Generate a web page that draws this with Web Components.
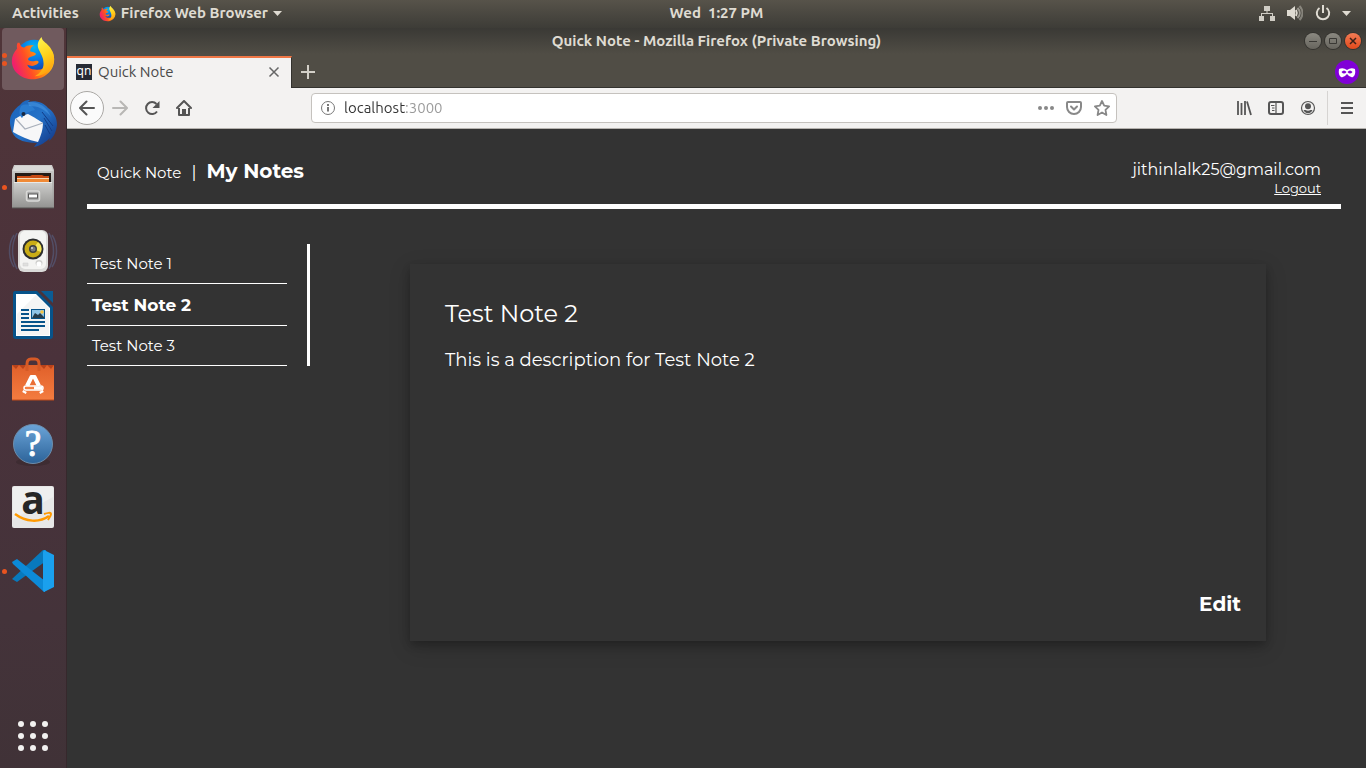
<!DOCTYPE html>
<html lang="en">
<head>
<meta charset="utf-8">
<meta name="viewport" content="width=device-width, initial-scale=1">
<title>Quick Note</title>
<style>
  html, body { margin: 0; height: 100%; }
  body { background: #333; font-family: Ubuntu, "Noto Sans", sans-serif; }
</style>
</head>
<body>
<desk-top>
  <system-bar slot="bar"></system-bar>
  <app-dock slot="dock"></app-dock>
  <browser-window heading="Quick Note - Mozilla Firefox (Private Browsing)" tab="Quick Note" address="localhost:3000">
    <quick-notes>
      <user-badge slot="user" email="jithinlalk25@gmail.com"></user-badge>
      <note-item slot="list">Test Note 1</note-item>
      <note-item slot="list" selected>Test Note 2</note-item>
      <note-item slot="list">Test Note 3</note-item>
      <note-card heading="Test Note 2">This is a description for Test Note 2</note-card>
    </quick-notes>
  </browser-window>
</desk-top>

<script>
const FIREFOX = `<svg viewBox="0 0 48 48" aria-hidden="true">
  <defs>
    <radialGradient id="globe" cx=".5" cy=".2" r=".8"><stop offset="0" stop-color="#00b7f5"/><stop offset=".5" stop-color="#0a6fe0"/><stop offset="1" stop-color="#1d2b8f"/></radialGradient>
    <linearGradient id="fox" x1=".9" y1=".3" x2=".05" y2=".6"><stop offset="0" stop-color="#ffc21c"/><stop offset=".3" stop-color="#ff960e"/><stop offset=".65" stop-color="#ff4f24"/><stop offset="1" stop-color="#f0206c"/></linearGradient>
    <linearGradient id="tail" x1=".3" y1="0" x2=".6" y2="1"><stop offset="0" stop-color="#fff44f"/><stop offset=".5" stop-color="#ffd21c"/><stop offset="1" stop-color="#ff9a0d"/></linearGradient>
  </defs>
  <circle cx="25" cy="24" r="19" fill="url(#globe)"/>
  <path fill="url(#fox)" d="M8 8c-1 2-1 4-.5 6C4 18 2 22 2 27c0 11 10 19 22 19s22-9 22-20c0-3-1-7-2-9-1 9-2 12-6 14-2 4-6 6-12 5-4 0-7-2-8-5 3 1 6 2 9 0 2-1 4-3 2-4-3-1-4 2-10-1-1-4 6-3 8-6 0-2-4-2-6-3 0-2 1-5 4-6-4-1-8 0-10 2-2 0-4-1-5-5Z"/>
  <path fill="url(#tail)" d="M33 2c-4 4-5 8-3 13 3 6 5 9 5 15 0 6-4 10-9 13 12-1 20-9 20-18 0-8-5-13-8-16-2-2-5-4-5-7Z"/>
</svg>`;

function define(name, markup, setup) {
  const template = document.createElement('template');
  template.innerHTML = markup;
  customElements.define(name, class extends HTMLElement {
    constructor() {
      super();
      this.attachShadow({ mode: 'open' }).append(template.content.cloneNode(true));
    }
    connectedCallback() {
      if (setup) setup(this, selector => this.shadowRoot.querySelector(selector));
    }
  });
}

define('desk-top', `
<style>
  :host { display: grid; grid-template: auto 1fr / auto 1fr; min-height: 100vh; }
  slot[name=bar]::slotted(*) { grid-column: 1 / -1; }
</style>
<slot name="bar"></slot><slot name="dock"></slot><slot></slot>`);

define('system-bar', `
<style>
  :host { box-sizing: border-box; display: grid; grid-template-columns: 67px 1fr auto 1fr; align-items: center; height: 28px; padding-bottom: 2px;
    background: linear-gradient(#57534a, #3d3c37); color: #dfdbd2; font-size: 15px; font-weight: 700; line-height: 20px; }
  button { all: unset; display: flex; align-items: center; white-space: pre; }
  .left { grid-column: 1 / 3; display: flex; gap: 20px; padding-left: 12px; }
  .right { display: flex; justify-content: flex-end; align-items: center; gap: 12px; padding-right: 15px; }
  .logo { width: 17px; height: 17px; margin-right: 5px; display: block; }
  svg { display: block; }
  .arrow { margin-left: 5px; }
  .right .arrow { margin-left: -1px; }
</style>
<div class="left">
  <button>Activities</button>
  <button><span class="logo">${FIREFOX}</span>Firefox Web Browser<svg class="arrow" width="9" height="5"><path d="M0 0h9L4.500 5Z" fill="#dfdbd2"/></svg></button>
</div>
<button>Wed  1:27 PM</button>
<div class="right">
  <button aria-label="Network"><svg width="16" height="16" fill="#cfccc4"><path d="M5 1h6v5H8.500v2H14v3h2v5h-5v-5h2V9H3v2h2v5H0v-5h2V8h5.500V6H5Z"/></svg></button>
  <button aria-label="Volume"><svg width="16" height="16" fill="none" stroke="#dfdbd2"><path fill="#dfdbd2" stroke="none" d="M0 5h3l5-4v14l-5-4H0Z"/><path stroke-width="2" d="M9 5c1 2 1 4 0 6"/><path stroke-width="2" opacity=".55" d="M10.500 3c3 3 3 7 0 10"/><path stroke-width="2" opacity=".4" d="M12.500 1c4 4 4 10 0 14"/></svg></button>
  <button aria-label="Power"><svg width="16" height="16" fill="none" stroke="#dfdbd2" stroke-width="2"><path d="M8 0v8M4.500 3A6.200 6.200 0 1 0 11.500 3"/></svg></button>
  <button aria-label="System menu"><svg class="arrow" width="9" height="5"><path d="M0 0h9L4.500 5Z" fill="#dfdbd2"/></svg></button>
</div>`);

define('dock-tile', `
<style>
  :host { display: block; }
  button { all: unset; box-sizing: border-box; display: grid; grid-template-columns: 6px 50px 6px; align-items: center; width: 62px; height: 62px; border-radius: 4px; }
  :host([active]) button { background: #705a5e; }
  .dots { display: grid; gap: 3px; }
  i { width: 5px; height: 5px; border-radius: 50%; background: #e95420; }
</style>
<button><span class="dots"></span><slot></slot></button>`, (host, $) => {
  $('button').setAttribute('aria-label', host.getAttribute('label'));
  $('.dots').innerHTML = '<i></i>'.repeat(Number(host.getAttribute('windows') || 0));
});

define('app-dock', `
<style>
  :host { box-sizing: border-box; display: flex; flex-direction: column; gap: 2px; width: 67px; padding: 0 2px; border-right: 1px solid #36282c;
    background: linear-gradient(#503539, #4a323b 45%, #44333a 80%, #403237); }
  svg { display: block; width: 50px; height: 50px; overflow: visible; }
  dock-tile:last-child { margin-top: auto; margin-bottom: 1px; }
</style>
<dock-tile label="Firefox" active windows="2">${FIREFOX.replace('viewBox="0 0 48 48"', 'viewBox="-2 -1 52 52"')}</dock-tile>
<dock-tile label="Thunderbird">
  <svg viewBox="0 0 50 50"><defs><linearGradient id="bird" x1="0" y1="0" x2="1" y2="1"><stop offset="0" stop-color="#1c62b8"/><stop offset=".5" stop-color="#2472c8"/><stop offset="1" stop-color="#112f7d"/></linearGradient></defs>
  <path fill="url(#bird)" d="M12 7C15 3 18 2 22 2l-2 2c8-2 16 1 20 6 6 4 9 10 9 17-1 7-3 12-8 16l1-3c-4 4-10 8-16 9l3-4C14 45 4 40 3 30c-2-7-1-12 2-16 2-3 4-5 7-7Z"/>
  <path fill="#f7f7f8" d="m7 21 5-3 8-2c4 2 9 5 15 9 0 6-2 13-5 19C20 42 12 38 5 34Z"/>
  <path fill="none" stroke="#a9b0bb" stroke-width="1.200" d="m8 21 9 10 18-6"/>
  <path fill="#2a7cd0" d="M13 8c5-3 12-1 14 4-4 1-9 2-13 8-2-2-4-6-1-12Z"/><path fill="#57aaf0" opacity=".4" d="M20 4c10-1 19 4 23 15-6-8-13-11-22-11Z"/><path stroke="#123d88" stroke-width="1" fill="none" d="m34 14 11 14M36 20l8 13M37 27l5 9"/><circle cx="15.500" cy="16" r="2" fill="#172842"/></svg></dock-tile>
<dock-tile label="Files" windows="1">
  <svg viewBox="0 0 50 50"><defs><linearGradient id="steel" x1="0" y1="0" x2="0" y2="1"><stop offset="0" stop-color="#cfcfcd"/><stop offset="1" stop-color="#929290"/></linearGradient></defs>
  <path d="M6 3h38l2 5v38H4V8Z" fill="url(#steel)"/><path d="M7 4h36l2 5H5Z" fill="#dadad8"/><path d="M7 11h36v11H7Z" fill="#251b17"/><path d="M9 14h13l2-1h10l2 1h5v9H9Z" fill="#c94b14"/><path d="M9 16h32v6H9Z" fill="#f5d7b4"/><path d="M9 17h32v5H9Z" fill="#f08a36"/>
  <path d="M6 20h38l1 26H5Z" fill="url(#steel)"/><path d="M6 20h38v1H6Z" fill="#e9e9e7"/><rect x="18.500" y="29" width="13" height="10" rx="2" fill="#aaa" stroke="#d9d9d7" stroke-width="1.500"/><rect x="20.500" y="32" width="9" height="4" fill="#fff" stroke="#555"/><path d="M4 46h42" stroke="#555350"/></svg></dock-tile>
<dock-tile label="Rhythmbox">
  <svg viewBox="0 0 50 50"><g fill="none" stroke="#5b6f9c" stroke-width="1.500" opacity=".45"><path d="M6 9C0 18 0 32 6 41M9 7C3 18 3 32 9 43M44 9c6 9 6 23 0 32M41 7c6 11 6 25 0 36"/></g>
  <rect x="10" y="4" width="30" height="42" rx="6" fill="#dadad8"/><rect x="12" y="5" width="26" height="38" rx="5" fill="#f4f4f2"/><circle cx="25" cy="23" r="10.500" fill="#2d2e2f"/><circle cx="25" cy="23" r="8.500" fill="#c9ac16"/><path d="m25 23 5-7a9 9 0 0 1 3 10Z" fill="#f3e45a"/><circle cx="25" cy="23" r="4" fill="#3d3f41"/><circle cx="25" cy="23" r="2.500" fill="#777a7d"/><circle cx="24" cy="22" r="1" fill="#d7d9db"/><ellipse cx="31" cy="37" rx="3.500" ry="3" fill="#cfcfcd"/><circle cx="31" cy="38" r="2.500" fill="#fff"/><path d="M15 37h5v3h-5Z" fill="#e0e0de" stroke="#ccc" stroke-width=".5"/></svg></dock-tile>
<dock-tile label="LibreOffice Writer">
  <svg viewBox="0 0 50 50"><path d="M7 1h22l16 16v29q0 3-3 3H8q-3 0-3-3V4q0-3 2-3Z" fill="#07538a"/><path d="M33 1h12v12Z" fill="#0b5c94"/><path d="M8 4h20l14 14v28H8Z" fill="#fff"/><path d="M9 24 28 5l13 13v27H9Z" fill="#ededed" opacity=".6"/>
  <path d="M13 20h8M13 24h8M13 28h8M13 32h24M13 36h24M13 40h18" stroke="#07538a" stroke-width="2"/><path d="M23 19h14v10H23Z" fill="#07538a"/><path d="M24 20h12v8H24Z" fill="#8fc4e6"/><circle cx="34" cy="22" r="1.800" fill="#f6c342"/><path d="m24 28 3-5 3 2 2-2 4 4v1Z" fill="#263c4a"/></svg></dock-tile>
<dock-tile label="Ubuntu Software">
  <svg viewBox="0 0 50 50"><defs><linearGradient id="bag" x1="0" y1="0" x2="0" y2="1"><stop offset="0" stop-color="#e0602a"/><stop offset="1" stop-color="#f47c40"/></linearGradient></defs><path d="M4 11h42v35H4Z" fill="url(#bag)"/><path d="m4 11 4 4 3-4 4 4 3-4Zm28 0 4 4 3-4 4 4 3-4Z" fill="#b9421a"/><path fill="none" stroke="#d65a26" stroke-width="3" d="M19 17v-7q0-5 4-5h4q4 0 4 5v7"/><path d="M4 46h42" stroke="#c04b1a"/>
  <g stroke="#fff" fill="none"><path stroke-width="4" d="m24 22-5 10m7-10 5 10M17 37l-1 2m17-2 1 2"/><path stroke-width="2" d="M23 22h4"/><rect x="16" y="32" width="19" height="4" rx="2" fill="#f47f43" stroke-width="1.500"/><path stroke-width="3" d="M26 34h8"/></g></svg></dock-tile>
<dock-tile label="Help">
  <svg viewBox="0 0 50 50"><defs><linearGradient id="help" x1="0" y1="0" x2="0" y2="1"><stop offset="0" stop-color="#6ba4d8"/><stop offset="1" stop-color="#2c6399"/></linearGradient></defs><ellipse cx="25" cy="44" rx="17" ry="4" fill="#33252a" opacity=".5"/><circle cx="25" cy="26" r="19.500" fill="url(#help)" stroke="#6c8dab"/><text x="25" y="38" text-anchor="middle" fill="#fff" stroke="#fff" font-family="Liberation Serif, serif" font-size="37">?</text></svg></dock-tile>
<dock-tile label="Amazon">
  <svg viewBox="0 0 50 50"><rect x="4" y="4" width="42" height="42" rx="2" fill="#e7e7e7"/><path d="M5 5h40v10L5 37Z" fill="#fff" opacity=".35"/><text x="25" y="32" text-anchor="middle" fill="#262626" font-family="Open Sans, sans-serif" font-size="39" font-weight="700">a</text><path d="M7 32c11 8 24 9 34 2" fill="none" stroke="#f90" stroke-width="2.500"/><path d="M36 32c3-1 7-2 7 0s-2 4-3 6" fill="none" stroke="#f90" stroke-width="2"/></svg></dock-tile>
<dock-tile label="Visual Studio Code" windows="1">
  <svg viewBox="0 0 50 50"><path fill="#0879bd" d="M4 33 35 4h3v11L9 36Z"/><path fill="#0c8ad8" d="m4 16 5-3 28 22v11h-1L5 18Z"/><path fill="#1aa0ee" d="m36 4 10 5v32l-10 5-1-2V6Z"/></svg></dock-tile>
<dock-tile label="Show Applications">
  <svg viewBox="0 0 50 50" fill="#f2f1f0"><circle cx="13" cy="13" r="3"/><circle cx="25" cy="13" r="3"/><circle cx="37" cy="13" r="3"/><circle cx="13" cy="25" r="3"/><circle cx="25" cy="25" r="3"/><circle cx="37" cy="25" r="3"/><circle cx="13" cy="37" r="3"/><circle cx="25" cy="37" r="3"/><circle cx="37" cy="37" r="3"/></svg></dock-tile>`);

define('browser-window', `
<style>
  :host { display: flex; flex-direction: column; min-width: 0; }
  button { all: unset; display: grid; place-items: center; }
  svg { display: block; }
  .frame { background: linear-gradient(#3a3935, #504d45 26px, #504d45); border-bottom: 1px solid #33322e; }
  .title { box-sizing: border-box; display: grid; grid-template-columns: 1fr auto 1fr; align-items: center; height: 28px; padding-bottom: 2px; color: #dfdbd2; font-size: 15px; font-weight: 700; line-height: 20px; }
  .title b { grid-column: 2; font-weight: inherit; }
  .controls { display: flex; justify-content: flex-end; gap: 4px; padding-right: 5px; }
  .controls button { width: 16px; height: 16px; border-radius: 50%; background: linear-gradient(#8b8981, #67655e); box-shadow: 0 0 0 1px #34332f; }
  .controls .close { background: linear-gradient(#f27c55, #e2491b); }
  .tabs { display: flex; align-items: center; height: 31px; }
  .tab { box-sizing: border-box; display: flex; align-items: center; gap: 6px; width: 225px; height: 32px; margin-bottom: -1px; padding: 0 10px 2px 9px; border-top: 2px solid #f07746; border-right: 1px solid #33322e; background: #f3f2f1; color: #4a4a4a; font-size: 15px; line-height: 20px; }
  .tab span { flex: 1; }
  .tab i { width: 16px; height: 16px; background: #262a34; color: #fff; font: 12px/14px "Noto Sans", sans-serif; text-align: center; }
  .new { width: 32px; height: 30px; }
  .private { margin-left: auto; margin-right: 7px; }
  .bar { display: flex; align-items: center; height: 40px; padding: 0 3px; background: #f3f2f1; border-bottom: 1px solid #b5b2ae; }
  .nav, .tools { display: flex; align-items: center; }
  .nav button, .tools button { width: 32px; height: 32px; }
  .nav .back { box-sizing: border-box; width: 34px; height: 34px; background: #fbfbfb; border: 1px solid #aaa8a5; border-radius: 50%; }
  form { box-sizing: border-box; flex: 1; display: flex; align-items: center; gap: 8px; height: 30px; margin: 0 111px; padding: 0 4px 0 8px; background: #fff; border: 1px solid #c5c2be; border-radius: 4px; }
  input { all: unset; flex: 1; min-width: 0; font-size: 15px; line-height: 20px; background: linear-gradient(90deg, #333 62px, #999 62px); background-clip: text; -webkit-text-fill-color: transparent; }
  form button { width: 20px; height: 20px; }
  .tools hr { width: 1px; height: 34px; margin: 0 3px; border: 0; background: #d6d4d2; }
  main { flex: 1; background: #333; }
</style>
<div class="frame">
  <div class="title"><b></b><div class="controls">
    <button aria-label="Minimize"><svg width="16" height="16" stroke="#3a3935"><path d="M4 8.500h8"/></svg></button>
    <button aria-label="Maximize"><svg width="16" height="16" stroke="#3a3935" fill="none"><path d="M4.500 5.500h7v5h-7Z"/></svg></button>
    <button class="close" aria-label="Close"><svg width="16" height="16" stroke="#3a2018" stroke-width="1.500"><path d="m5 5 6 6m0-6-6 6"/></svg></button>
  </div></div>
  <div class="tabs">
    <div class="tab"><i>qn</i><span></span><button aria-label="Close tab"><svg width="14" height="14" stroke="#666" stroke-width="1.500"><path d="m2.500 2.500 9 9m0-9-9 9"/></svg></button></div>
    <button class="new" aria-label="New tab"><svg width="14" height="14" stroke="#d3d0c8" stroke-width="2"><path d="M7 0v14M0 7h14"/></svg></button>
    <svg class="private" width="24" height="24"><circle cx="12" cy="12" r="12" fill="#8000d7"/><path fill="#fff" fill-rule="evenodd" d="M4 9q4-2 8 1 4-3 8-1 1 6-2 8-3 1-6-3-3 4-6 3-3-2-2-8Zm2.500 3q2.500 3 5 0-2.500-3-5 0Zm6 0q2.500 3 5 0-2.500-3-5 0Z"/></svg>
  </div>
</div>
<div class="bar">
  <div class="nav">
    <button class="back" aria-label="Back"><svg width="16" height="16" fill="none" stroke="#555" stroke-width="2" stroke-linecap="round" stroke-linejoin="round"><path d="M15 8H1.500m6-6.500L1 8l6.500 6.500"/></svg></button>
    <button aria-label="Forward"><svg width="16" height="16" fill="none" stroke="#b8b7b5" stroke-width="2" stroke-linecap="round" stroke-linejoin="round"><path d="M1 8h13.500m-6-6.500L15 8l-6.500 6.500"/></svg></button>
    <button aria-label="Reload"><svg width="16" height="16" fill="none" stroke="#555" stroke-width="2"><path d="M13 11.500A6 6 0 1 1 12.500 4"/><path fill="#555" stroke="none" d="M15.500 1v7h-7Z"/></svg></button>
    <button aria-label="Home"><svg width="16" height="16" fill="none" stroke="#555" stroke-width="2" stroke-linejoin="round"><path stroke-linecap="round" d="m1 8 7-7 7 7"/><path d="M3 8v7h10V8"/><path fill="#555" stroke="none" d="M6 9h4v6H6Z"/></svg></button>
  </div>
  <form>
    <svg width="16" height="16" fill="none" stroke="#777"><circle cx="8" cy="8" r="6.500"/><path stroke-width="2" d="M8 7v4.500M8 4v2"/></svg>
    <input type="text" aria-label="Address">
    <button type="button" aria-label="Page actions"><svg width="18" height="4" fill="#888"><circle cx="3" cy="2" r="2"/><circle cx="9" cy="2" r="2"/><circle cx="15" cy="2" r="2"/></svg></button>
    <button type="button" aria-label="Save to Pocket"><svg width="16" height="16" fill="none" stroke="#888" stroke-width="2" stroke-linecap="round" stroke-linejoin="round"><path d="M2 2h12q1 0 1 1v4a7 7 0 0 1-14 0V3q0-1 1-1Z"/><path d="m5 6.500 3 3 3-3"/></svg></button>
    <button type="button" aria-label="Bookmark"><svg width="16" height="16" fill="none" stroke="#888" stroke-width="1.800" stroke-linejoin="round"><path d="m8 1 2.200 4.700 4.900.6-3.600 3.500.9 5.200L8 12.500 3.600 15l.9-5.200L.9 6.300l4.900-.6Z"/></svg></button>
  </form>
  <div class="tools">
    <button aria-label="Library"><svg width="16" height="16" stroke="#555" stroke-width="2"><path d="M2 1v14M5.500 3v12M9 1v14M11 1.500 15 15" stroke-width="1.800"/></svg></button>
    <button aria-label="Sidebars"><svg width="16" height="16" fill="none" stroke="#555" stroke-width="2"><rect x="1" y="2" width="14" height="12" rx="2"/><path stroke-width="1.200" d="M8 2v12M3 5.500h3.500M4 8h2.500M4 10.500h2.500"/></svg></button>
    <button aria-label="Account"><svg width="16" height="16" fill="none" stroke="#555"><circle cx="8" cy="8" r="6.500" stroke-width="1.200"/><circle cx="8" cy="6.300" r="3" fill="#555" stroke="none"/><path fill="#555" stroke="none" d="M3.500 10h2q2.500 1.500 5 0h2q-1 3-4.500 3.200-3.500-.2-4.500-3.200Z"/></svg></button>
    <hr>
    <button aria-label="Menu"><svg width="12" height="12" stroke="#555" stroke-width="2"><path d="M0 1h12M0 6h12M0 11h12"/></svg></button>
  </div>
</div>
<main><slot></slot></main>`, (host, $) => {
  $('.title b').textContent = host.getAttribute('heading');
  $('.tab span').textContent = host.getAttribute('tab');
  $('input').value = host.getAttribute('address');
});

define('quick-notes', `
<style>
  :host { display: block; padding: 20px 25px 20px 20px; color: #fff; font-family: Montserrat, Inter, sans-serif; }
  header { display: flex; justify-content: space-between; height: 45px; padding: 10px 20px 0 10px; border-bottom: 5px solid #fff; }
  .brand { display: flex; align-items: baseline; gap: 10px; font-size: 15px; line-height: 24px; }
  .brand i { font-style: normal; font-size: 17px; }
  h1 { margin: 0; font-size: 20px; font-weight: 700; }
  .body { display: flex; align-items: flex-start; padding-top: 35px; }
  nav { width: 200px; padding-right: 20px; border-right: 3px solid #fff; }
  section { flex: 1; min-width: 0; margin: 20px 75px 0 100px; }
</style>
<header><div class="brand"><span>Quick Note</span><i>|</i><h1>My Notes</h1></div><slot name="user"></slot></header>
<div class="body"><nav><slot name="list"></slot></nav><section><slot></slot></section></div>`);

define('user-badge', `
<style>
  :host { display: grid; align-content: start; justify-items: end; font-size: 16px; line-height: 22px; }
  a { color: inherit; font-size: 13px; line-height: 15px; }
</style>
<span></span><a href="#logout">Logout</a>`, (host, $) => { $('span').textContent = host.getAttribute('email'); });

define('note-item', `
<style>
  :host { display: block; border-bottom: 1px solid #fff; }
  a { display: block; padding: 10px 5px; color: inherit; text-decoration: none; font-size: 15px; line-height: 19px; }
  :host([selected]) a { padding: 11px 5px 9px; font-size: 17px; font-weight: 700; line-height: 21px; }
</style>
<a href="#note"><slot></slot></a>`);

define('note-card', `
<style>
  :host { box-sizing: border-box; display: flex; flex-direction: column; min-height: 377px; padding: 35px 25px 25px 35px; box-shadow: 0 4px 8px rgba(0,0,0,.2), 0 6px 20px rgba(0,0,0,.19); }
  h2 { margin: 0 0 20px; font-size: 24px; font-weight: 400; line-height: 30px; }
  p { margin: 0; font-size: 18px; font-weight: 400; line-height: 22px; }
  button { all: unset; align-self: flex-end; margin-top: auto; font-size: 20px; font-weight: 700; line-height: 24px; }
</style>
<h2></h2><p><slot></slot></p><button>Edit</button>`, (host, $) => { $('h2').textContent = host.getAttribute('heading'); });
</script>
</body>
</html>
